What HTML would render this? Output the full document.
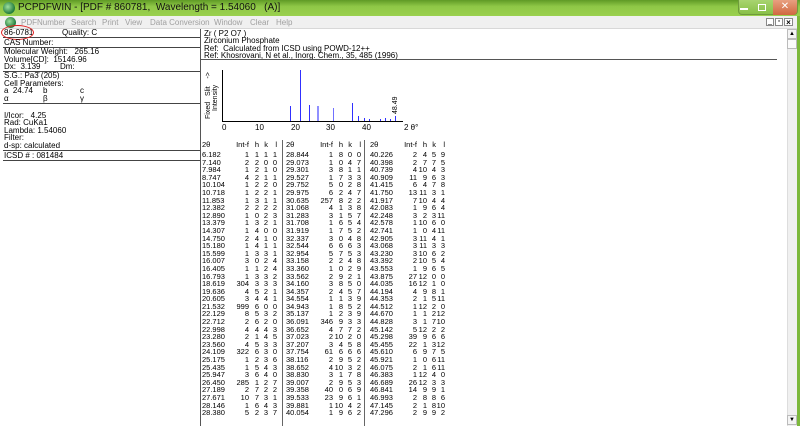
<!DOCTYPE html>
<html><head><meta charset="utf-8"><style>
*{margin:0;padding:0;box-sizing:border-box}
body{width:800px;height:426px;overflow:hidden;background:#fff;font-family:"Liberation Sans",sans-serif;font-size:8px;color:#000;position:relative}
.abs{position:absolute}
#title{left:0;top:0;width:800px;height:16px;background:linear-gradient(#5f9a25,#8fc847 40%,#9ad04e);}
#title .t{left:18px;top:2px;font-size:10px;color:#111;white-space:nowrap}
#menu{left:0;top:16px;width:797px;height:13px;background:#f0f0f0;border-bottom:1px solid #d8d8d8}
#menu span{position:absolute;top:2px;font-size:8px;color:#a0a0a0;white-space:nowrap}
.lp{left:0;top:29px;width:201px;height:397px;border-right:1px solid #555;}
.hl{position:absolute;left:3px;width:197px;height:0;border-top:1px solid #444}
.tx{position:absolute;white-space:nowrap;font-size:8px;line-height:8px}
.col{position:absolute;top:151px;font-size:7.5px}
.col p{position:relative;height:7.6px;line-height:7.6px;white-space:nowrap}
.col p>*{position:absolute;font-style:normal;font-weight:normal;text-decoration:none}
.col a{left:0}.col b{right:calc(100% - 47px)}.col i{right:calc(100% - 57px)}.col u{right:calc(100% - 66px)}.col s{right:calc(100% - 75px)}
.col{width:80px}
.pk{position:absolute;width:1px;background:#3030ff;bottom:305px}
</style></head><body>
<div id="title" class="abs">
 <div class="abs" style="left:3px;top:2px;width:12px;height:12px;border-radius:50%;background:radial-gradient(circle at 40% 40%,#9fe09f,#1f7a3a 70%)"></div>
 <div class="abs t">PCPDFWIN - [PDF # 860781,&nbsp; Wavelength = 1.54060&nbsp;&nbsp; (A)]</div>
 <div class="abs" style="left:738px;top:0;width:60px;height:15px;border:1px solid #6f9b3c;border-top:none;border-radius:0 0 4px 4px;background:linear-gradient(#a8d470,#88c048)"></div>
 <div class="abs" style="left:740px;top:8px;width:8px;height:2px;border:1px solid #fff"></div>
 <div class="abs" style="left:758px;top:4px;width:8px;height:7px;border:1px solid #fff"></div>
 <div class="abs" style="left:773px;top:0;width:24px;height:15px;background:linear-gradient(#e8a080,#d06840);border-radius:0 0 4px 0;color:#fff;font-size:10px;text-align:center;line-height:14px">✕</div>
</div>
<div id="menu" class="abs">
 <div class="abs" style="left:5px;top:1px;width:11px;height:11px;border-radius:50%;background:radial-gradient(circle at 40% 40%,#9fe09f,#1f7a3a 70%)"></div>
 <span style="left:21px">PDFNumber</span><span style="left:71px">Search</span><span style="left:102px">Print</span><span style="left:125px">View</span><span style="left:150px">Data Conversion</span><span style="left:214px">Window</span><span style="left:250px">Clear</span><span style="left:276px">Help</span>
 <div class="abs" style="left:766px;top:2px;width:8px;height:8px;border:1px solid #888;background:#fff;font-size:7px;line-height:6px;text-align:center">_</div>
 <div class="abs" style="left:775px;top:2px;width:8px;height:8px;border:1px solid #888;background:#fff;font-size:7px;line-height:6px;text-align:center">▫</div>
 <div class="abs" style="left:784px;top:2px;width:9px;height:8px;border:1px solid #888;background:#fff;font-size:8px;line-height:7px;text-align:center;font-weight:bold">×</div>
</div>
<div class="abs" style="left:797px;top:16px;width:3px;height:410px;background:#7cb83c"></div>
<div class="abs" style="left:787px;top:29px;width:10px;height:397px;background:#f0f0f0;border-left:1px solid #ddd"></div>
<div class="abs" style="left:787px;top:29px;width:10px;height:10px;background:#f4f4f4;border:1px solid #bbb;font-size:6px;text-align:center;line-height:8px">▲</div>
<div class="abs" style="left:787px;top:39px;width:10px;height:10px;background:#fbfbfb;border:1px solid #bbb"></div>
<div class="abs" style="left:787px;top:415px;width:10px;height:10px;background:#f4f4f4;border:1px solid #bbb;font-size:6px;text-align:center;line-height:8px">▼</div>

<div class="abs lp"></div>
<div class="hl" style="top:37px"></div>
<div class="hl" style="top:47px"></div>
<div class="hl" style="top:71px"></div>
<div class="hl" style="top:103px"></div>
<div class="hl" style="top:150px"></div>
<div class="hl" style="top:160px"></div>
<div class="tx" style="left:4px;top:29px">86-0781</div>
<div class="tx" style="left:62px;top:29px">Quality: C</div>
<div class="abs" style="left:1px;top:25px;width:33px;height:15px;border:1.5px solid #e02020;border-radius:50%"></div>
<div class="tx" style="left:4px;top:39px">CAS Number:</div>
<div class="tx" style="left:4px;top:48px">Molecular Weight:&nbsp;&nbsp; 265.16</div>
<div class="tx" style="left:4px;top:56px">Volume[CD]:&nbsp; 15146.96</div>
<div class="tx" style="left:4px;top:63px">Dx:&nbsp; 3.139</div><div class="tx" style="left:60px;top:63px">Dm:</div>
<div class="tx" style="left:4px;top:72px">S.G.: Pa3̄ (205)</div>
<div class="tx" style="left:4px;top:80px">Cell Parameters:</div>
<div class="tx" style="left:4px;top:87px">a&nbsp; 24.74</div><div class="tx" style="left:43px;top:87px">b</div><div class="tx" style="left:80px;top:87px">c</div>
<div class="tx" style="left:4px;top:95px">α</div><div class="tx" style="left:43px;top:95px">β</div><div class="tx" style="left:80px;top:95px">γ</div>
<div class="tx" style="left:4px;top:112px">I/Icor:&nbsp;&nbsp; 4.25</div>
<div class="tx" style="left:4px;top:119px">Rad: CuKa1</div>
<div class="tx" style="left:4px;top:127px">Lambda: 1.54060</div>
<div class="tx" style="left:4px;top:134px">Filter:</div>
<div class="tx" style="left:4px;top:142px">d-sp: calculated</div>
<div class="tx" style="left:4px;top:152px">ICSD # : 081484</div>

<div class="tx" style="left:204px;top:30px">Zr ( P2 O7 )</div>
<div class="tx" style="left:204px;top:37px">Zirconium Phosphate</div>
<div class="tx" style="left:204px;top:45px">Ref:&nbsp; Calculated from ICSD using POWD-12++</div>
<div class="tx" style="left:204px;top:52px">Ref: Khosrovani, N et al., Inorg. Chem., 35, 485 (1996)</div>
<div class="abs" style="left:201px;top:59px;width:576px;height:0;border-top:1px solid #555"></div>

<div class="abs" style="left:222px;top:70px;width:1px;height:52px;background:#000"></div>
<div class="abs" style="left:222px;top:121px;width:181px;height:1px;background:#000"></div>
<div class="tx" style="left:205px;top:119px;transform:rotate(-90deg);transform-origin:0 0;font-size:7px">Fixed&nbsp;&nbsp; Slit&nbsp;&nbsp;&nbsp; -&gt;</div>
<div class="tx" style="left:212px;top:111px;transform:rotate(-90deg);transform-origin:0 0;font-size:7px">Intensity</div>
<div class="tx" style="left:222px;top:124px">0</div><div class="tx" style="left:255px;top:124px">10</div><div class="tx" style="left:291px;top:124px">20</div><div class="tx" style="left:326px;top:124px">30</div><div class="tx" style="left:362px;top:124px">40</div><div class="tx" style="left:404px;top:124px">2 θ°</div>
<div class="pk" style="left:290px;height:15px"></div>
<div class="pk" style="left:300px;height:51px"></div>
<div class="pk" style="left:309px;height:16px"></div>
<div class="pk" style="left:317px;height:15px;background:#9090ff;width:2px"></div>
<div class="pk" style="left:333px;height:13px;background:#7070ff"></div>
<div class="pk" style="left:352px;height:18px"></div>
<div class="pk" style="left:358px;height:5px"></div>
<div class="pk" style="left:364px;height:3px"></div>
<div class="pk" style="left:369px;height:2px"></div>
<div class="pk" style="left:380px;height:2px"></div>
<div class="pk" style="left:385px;height:3px"></div>
<div class="pk" style="left:390px;height:2px"></div>
<div class="pk" style="left:395px;height:5px"></div>
<div class="tx" style="left:392px;top:114px;transform:rotate(-90deg);transform-origin:0 0;font-size:7px">48.49</div>

<div class="abs" style="left:282px;top:140px;width:1px;height:286px;background:#666"></div>
<div class="abs" style="left:364px;top:140px;width:1px;height:286px;background:#666"></div>

<div class="col" style="left:202px;top:141px"><p><a>2θ</a><b>Int-f</b><i>h</i><u>k</u><s>l</s></p></div>
<div class="col" style="left:286px;top:141px"><p><a>2θ</a><b>Int-f</b><i>h</i><u>k</u><s>l</s></p></div>
<div class="col" style="left:370px;top:141px"><p><a>2θ</a><b>Int-f</b><i>h</i><u>k</u><s>l</s></p></div>

<div class="col" style="left:202px">
<p><a>6.182</a><b>1</b><i>1</i><u>1</u><s>1</s></p>
<p><a>7.140</a><b>2</b><i>2</i><u>0</u><s>0</s></p>
<p><a>7.984</a><b>1</b><i>2</i><u>1</u><s>0</s></p>
<p><a>8.747</a><b>4</b><i>2</i><u>1</u><s>1</s></p>
<p><a>10.104</a><b>1</b><i>2</i><u>2</u><s>0</s></p>
<p><a>10.718</a><b>1</b><i>2</i><u>2</u><s>1</s></p>
<p><a>11.853</a><b>1</b><i>3</i><u>1</u><s>1</s></p>
<p><a>12.382</a><b>2</b><i>2</i><u>2</u><s>2</s></p>
<p><a>12.890</a><b>1</b><i>0</i><u>2</u><s>3</s></p>
<p><a>13.379</a><b>1</b><i>3</i><u>2</u><s>1</s></p>
<p><a>14.307</a><b>1</b><i>4</i><u>0</u><s>0</s></p>
<p><a>14.750</a><b>2</b><i>4</i><u>1</u><s>0</s></p>
<p><a>15.180</a><b>1</b><i>4</i><u>1</u><s>1</s></p>
<p><a>15.599</a><b>1</b><i>3</i><u>3</u><s>1</s></p>
<p><a>16.007</a><b>3</b><i>0</i><u>2</u><s>4</s></p>
<p><a>16.405</a><b>1</b><i>1</i><u>2</u><s>4</s></p>
<p><a>16.793</a><b>1</b><i>3</i><u>3</u><s>2</s></p>
<p><a>18.619</a><b>304</b><i>3</i><u>3</u><s>3</s></p>
<p><a>19.636</a><b>4</b><i>5</i><u>2</u><s>1</s></p>
<p><a>20.605</a><b>3</b><i>4</i><u>4</u><s>1</s></p>
<p><a>21.532</a><b>999</b><i>6</i><u>0</u><s>0</s></p>
<p><a>22.129</a><b>8</b><i>5</i><u>3</u><s>2</s></p>
<p><a>22.712</a><b>2</b><i>6</i><u>2</u><s>0</s></p>
<p><a>22.998</a><b>4</b><i>4</i><u>4</u><s>3</s></p>
<p><a>23.280</a><b>2</b><i>1</i><u>4</u><s>5</s></p>
<p><a>23.560</a><b>4</b><i>5</i><u>3</u><s>3</s></p>
<p><a>24.109</a><b>322</b><i>6</i><u>3</u><s>0</s></p>
<p><a>25.175</a><b>1</b><i>2</i><u>3</u><s>6</s></p>
<p><a>25.435</a><b>1</b><i>5</i><u>4</u><s>3</s></p>
<p><a>25.947</a><b>3</b><i>6</i><u>4</u><s>0</s></p>
<p><a>26.450</a><b>285</b><i>1</i><u>2</u><s>7</s></p>
<p><a>27.189</a><b>2</b><i>7</i><u>2</u><s>2</s></p>
<p><a>27.671</a><b>10</b><i>7</i><u>3</u><s>1</s></p>
<p><a>28.146</a><b>1</b><i>6</i><u>4</u><s>3</s></p>
<p><a>28.380</a><b>5</b><i>2</i><u>3</u><s>7</s></p>
</div>
<div class="col" style="left:286px">
<p><a>28.844</a><b>1</b><i>8</i><u>0</u><s>0</s></p>
<p><a>29.073</a><b>1</b><i>0</i><u>4</u><s>7</s></p>
<p><a>29.301</a><b>3</b><i>8</i><u>1</u><s>1</s></p>
<p><a>29.527</a><b>1</b><i>7</i><u>3</u><s>3</s></p>
<p><a>29.752</a><b>5</b><i>0</i><u>2</u><s>8</s></p>
<p><a>29.975</a><b>6</b><i>2</i><u>4</u><s>7</s></p>
<p><a>30.635</a><b>257</b><i>8</i><u>2</u><s>2</s></p>
<p><a>31.068</a><b>4</b><i>1</i><u>3</u><s>8</s></p>
<p><a>31.283</a><b>3</b><i>1</i><u>5</u><s>7</s></p>
<p><a>31.708</a><b>1</b><i>6</i><u>5</u><s>4</s></p>
<p><a>31.919</a><b>1</b><i>7</i><u>5</u><s>2</s></p>
<p><a>32.337</a><b>3</b><i>0</i><u>4</u><s>8</s></p>
<p><a>32.544</a><b>6</b><i>6</i><u>6</u><s>3</s></p>
<p><a>32.954</a><b>5</b><i>7</i><u>5</u><s>3</s></p>
<p><a>33.158</a><b>2</b><i>2</i><u>4</u><s>8</s></p>
<p><a>33.360</a><b>1</b><i>0</i><u>2</u><s>9</s></p>
<p><a>33.562</a><b>2</b><i>9</i><u>2</u><s>1</s></p>
<p><a>34.160</a><b>3</b><i>8</i><u>5</u><s>0</s></p>
<p><a>34.357</a><b>2</b><i>4</i><u>5</u><s>7</s></p>
<p><a>34.554</a><b>1</b><i>1</i><u>3</u><s>9</s></p>
<p><a>34.943</a><b>1</b><i>8</i><u>5</u><s>2</s></p>
<p><a>35.137</a><b>1</b><i>2</i><u>3</u><s>9</s></p>
<p><a>36.091</a><b>346</b><i>9</i><u>3</u><s>3</s></p>
<p><a>36.652</a><b>4</b><i>7</i><u>7</u><s>2</s></p>
<p><a>37.023</a><b>2</b><i>10</i><u>2</u><s>0</s></p>
<p><a>37.207</a><b>3</b><i>4</i><u>5</u><s>8</s></p>
<p><a>37.754</a><b>61</b><i>6</i><u>6</u><s>6</s></p>
<p><a>38.116</a><b>2</b><i>9</i><u>5</u><s>2</s></p>
<p><a>38.652</a><b>4</b><i>10</i><u>3</u><s>2</s></p>
<p><a>38.830</a><b>3</b><i>1</i><u>7</u><s>8</s></p>
<p><a>39.007</a><b>2</b><i>9</i><u>5</u><s>3</s></p>
<p><a>39.358</a><b>40</b><i>0</i><u>6</u><s>9</s></p>
<p><a>39.533</a><b>23</b><i>9</i><u>6</u><s>1</s></p>
<p><a>39.881</a><b>1</b><i>10</i><u>4</u><s>2</s></p>
<p><a>40.054</a><b>1</b><i>9</i><u>6</u><s>2</s></p>
</div>
<div class="col" style="left:370px">
<p><a>40.226</a><b>2</b><i>4</i><u>5</u><s>9</s></p>
<p><a>40.398</a><b>2</b><i>7</i><u>7</u><s>5</s></p>
<p><a>40.739</a><b>4</b><i>10</i><u>4</u><s>3</s></p>
<p><a>40.909</a><b>11</b><i>9</i><u>6</u><s>3</s></p>
<p><a>41.415</a><b>6</b><i>4</i><u>7</u><s>8</s></p>
<p><a>41.750</a><b>13</b><i>11</i><u>3</u><s>1</s></p>
<p><a>41.917</a><b>7</b><i>10</i><u>4</u><s>4</s></p>
<p><a>42.083</a><b>1</b><i>9</i><u>6</u><s>4</s></p>
<p><a>42.248</a><b>3</b><i>2</i><u>3</u><s>11</s></p>
<p><a>42.578</a><b>1</b><i>10</i><u>6</u><s>0</s></p>
<p><a>42.741</a><b>1</b><i>0</i><u>4</u><s>11</s></p>
<p><a>42.905</a><b>3</b><i>11</i><u>4</u><s>1</s></p>
<p><a>43.068</a><b>3</b><i>11</i><u>3</u><s>3</s></p>
<p><a>43.230</a><b>3</b><i>10</i><u>6</u><s>2</s></p>
<p><a>43.392</a><b>2</b><i>10</i><u>5</u><s>4</s></p>
<p><a>43.553</a><b>1</b><i>9</i><u>6</u><s>5</s></p>
<p><a>43.875</a><b>27</b><i>12</i><u>0</u><s>0</s></p>
<p><a>44.035</a><b>16</b><i>12</i><u>1</u><s>0</s></p>
<p><a>44.194</a><b>4</b><i>9</i><u>8</u><s>1</s></p>
<p><a>44.353</a><b>2</b><i>1</i><u>5</u><s>11</s></p>
<p><a>44.512</a><b>1</b><i>12</i><u>2</u><s>0</s></p>
<p><a>44.670</a><b>1</b><i>1</i><u>2</u><s>12</s></p>
<p><a>44.828</a><b>3</b><i>1</i><u>7</u><s>10</s></p>
<p><a>45.142</a><b>5</b><i>12</i><u>2</u><s>2</s></p>
<p><a>45.298</a><b>39</b><i>9</i><u>6</u><s>6</s></p>
<p><a>45.455</a><b>22</b><i>1</i><u>3</u><s>12</s></p>
<p><a>45.610</a><b>6</b><i>9</i><u>7</u><s>5</s></p>
<p><a>45.921</a><b>1</b><i>0</i><u>6</u><s>11</s></p>
<p><a>46.075</a><b>2</b><i>1</i><u>6</u><s>11</s></p>
<p><a>46.383</a><b>1</b><i>12</i><u>4</u><s>0</s></p>
<p><a>46.689</a><b>26</b><i>12</i><u>3</u><s>3</s></p>
<p><a>46.841</a><b>14</b><i>9</i><u>9</u><s>1</s></p>
<p><a>46.993</a><b>2</b><i>8</i><u>8</u><s>6</s></p>
<p><a>47.145</a><b>2</b><i>1</i><u>8</u><s>10</s></p>
<p><a>47.296</a><b>2</b><i>9</i><u>9</u><s>2</s></p>
</div>
</body></html>
